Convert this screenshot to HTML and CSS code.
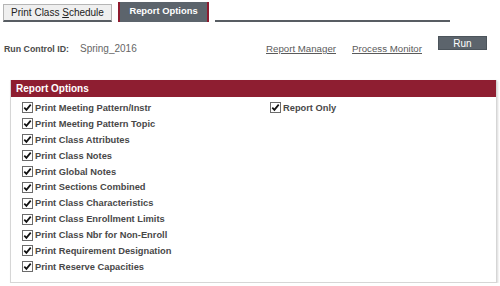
FILE: index.html
```html
<!DOCTYPE html>
<html lang="en">
<head>
    <meta charset="UTF-8">
    <title>Print Class Schedule - Report Options</title>
    <link rel="stylesheet" href="styles.css">
</head>
<body>
    <!-- Page tabs -->
    <div class="tabs">
        <div class="tab">Print Class <u>S</u>chedule</div>
        <div class="tab active">Report Options</div>
        <div class="tab-line"></div>
    </div>

    <!-- Run control bar -->
    <div class="run-bar">
        <span class="run-label">Run Control ID:</span>
        <span class="run-value">Spring_2016</span>
        <a href="#" class="run-link manager">Report Manager</a>
        <a href="#" class="run-link monitor">Process Monitor</a>
        <button class="run-button">Run</button>
    </div>

    <!-- Report options group box -->
    <div class="group">
        <div class="group-header">Report Options</div>
        <div class="options" id="options"></div>
    </div>

    <script>
        const leftOptions = [
            'Print Meeting Pattern/Instr',
            'Print Meeting Pattern Topic',
            'Print Class Attributes',
            'Print Class Notes',
            'Print Global Notes',
            'Print Sections Combined',
            'Print Class Characteristics',
            'Print Class Enrollment Limits',
            'Print Class Nbr for Non-Enroll',
            'Print Requirement Designation',
            'Print Reserve Capacities'
        ];

        const checkSvg = '<svg class="check" width="11" height="11" viewBox="0 0 11 11">' +
            '<rect x="0.5" y="0.5" width="10" height="10" fill="#fff" stroke="#6b6b6b"/>' +
            '<path d="M2.3 5.6 L4.4 7.9 L8.7 2.6" fill="none" stroke="#111" stroke-width="1.7"/>' +
            '</svg>';

        function optionHTML(text) {
            return `<label class="option">${checkSvg}<span>${text}</span></label>`;
        }

        let html = '';
        leftOptions.forEach((text, index) => {
            html += optionHTML(text);
            // second column only has one item, next to the first row
            html += index === 0 ? optionHTML('Report Only') : '<span></span>';
        });
        document.getElementById('options').innerHTML = html;
    </script>
</body>
</html>
```

FILE: styles.css
```css
body {
    margin: 0;
    font-family: "Liberation Sans", Arial, sans-serif;
    color: #4b4b4b;
    background: #fff;
}

/* Tabs */
.tabs {
    display: flex;
    align-items: flex-end;
    padding-top: 2px;
    height: 20px;
}
.tab {
    box-sizing: border-box;
    margin-left: 3px;
    width: 109px;
    height: 18px;
    padding-top: 2px;
    text-align: center;
    font-size: 10px;
    color: #222;
    background: #efefef;
    border: 1px solid #b5b5b5;
    border-bottom: 2px solid #585d63;
}
.tab.active {
    margin-left: 6px;
    width: 91px;
    height: 20px;
    padding-top: 3px;
    font-size: 9.4px;
    font-weight: bold;
    color: #fff;
    background: #5c646c;
    border: none;
    border-left: 2px solid #8e1b2f;
    border-right: 2px solid #8e1b2f;
}
.tab-line {
    margin-left: 6px;
    width: 235px;
    border-bottom: 2px solid #585d63;
}

/* Run control bar */
.run-bar {
    display: flex;
    align-items: flex-end;
    margin-top: 14px;
    height: 19px;
    font-size: 10px;
    line-height: 12px;
}
.run-label {
    padding-left: 4px;
    width: 76px;
    font-size: 8.8px;
    font-weight: bold;
    color: #4b4b4b;
}
.run-value {
    width: 186px;
    color: #666;
}
.run-link {
    color: #5a5a5a;
    font-size: 9.7px;
}
.manager {
    width: 86px;
}
.monitor {
    width: 86px;
}
.run-button {
    align-self: flex-start;
    margin: 0;
    padding: 0;
    width: 49px;
    height: 14px;
    border: 1px solid #4c545b;
    background: #5c646c;
    color: #fff;
    font-family: "Liberation Sans", Arial, sans-serif;
    font-size: 10px;
    line-height: 11px;
}

/* Group box */
.group {
    box-sizing: border-box;
    margin: 25px 0 0 10px;
    width: 487px;
    height: 203px;
    border: 1px solid #d6d6d6;
    border-top: none;
    box-shadow: 1px 1px 2px #d9d9d9;
}
.group-header {
    height: 17px;
    padding-left: 5px;
    background: #8e1e31;
    color: #fff;
    font-size: 10px;
    font-weight: bold;
    line-height: 17px;
}
.options {
    display: grid;
    grid-template-columns: 248px auto;
    grid-auto-rows: 15.9px;
    padding: 3px 0 0 11px;
}
.option {
    display: flex;
    align-items: center;
    gap: 2px;
    font-size: 9.3px;
    font-weight: bold;
    color: #484848;
    white-space: nowrap;
}
.check {
    flex: none;
}
```
